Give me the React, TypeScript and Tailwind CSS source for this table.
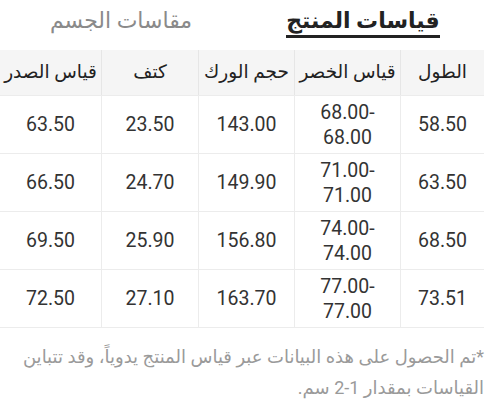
import React from "react";

const rows = [
  ["58.50", ["68.00-", "68.00"], "143.00", "23.50", "63.50"],
  ["63.50", ["71.00-", "71.00"], "149.90", "24.70", "66.50"],
  ["68.50", ["74.00-", "74.00"], "156.80", "25.90", "69.50"],
  ["73.51", ["77.00-", "77.00"], "163.70", "27.10", "72.50"],
];

const headers = ["الطول", "قياس الخصر", "حجم الورك", "كتف", "قياس الصدر"];
const widths = ["w-[84px]", "w-[106px]", "w-[96px]", "w-[97px]", "w-[101px]"];

export default function App() {
  return (
    <div
      className="w-[500px] h-[401px] bg-white overflow-hidden"
      style={{ fontFamily: "Roboto, 'DejaVu Sans', sans-serif" }}
    >
      <div dir="rtl" className="w-[484px]">
        <div className="flex h-[50px] items-start">
          <div className="w-1/2 flex justify-center pt-[7px]">
            <span className="text-[22px] font-bold text-[#222] border-b-[3px] border-[#222] leading-[28px]">
              قياسات المنتج
            </span>
          </div>
          <div className="w-1/2 flex justify-center pt-[7px]">
            <span className="text-[22px] text-[#8a8a8a] leading-[28px]">مقاسات الجسم</span>
          </div>
        </div>
        <div className="flex h-[46px] bg-[#f5f5f5] border-b border-[#ececec]">
          {headers.map((h, i) => (
            <div
              key={i}
              className={`${widths[i]} flex items-center justify-center text-[18.5px] text-[#222] ${i < 4 ? "border-l border-[#e6e6e6]" : ""}`}
            >
              {h}
            </div>
          ))}
        </div>
        {rows.map((r, ri) => (
          <div key={ri} className="flex h-[58px] border-b border-[#ececec]">
            {r.map((c, ci) => (
              <div
                key={ci}
                className={`${widths[ci]} flex flex-col items-center justify-center text-[19.5px] text-[#333] leading-[25px] ${ci < 4 ? "border-l border-[#ececec]" : ""}`}
              >
                {Array.isArray(c) ? (
                  <>
                    <span dir="ltr">{c[0]}</span>
                    <span dir="ltr">{c[1]}</span>
                  </>
                ) : (
                  <span dir="ltr">{c}</span>
                )}
              </div>
            ))}
          </div>
        ))}
        <p className="mt-[13px] text-[18px] leading-[31px] text-[#9a9a9a]">
          *تم الحصول على هذه البيانات عبر قياس المنتج يدوياً، وقد تتباين القياسات بمقدار 1-2 سم.
        </p>
      </div>
    </div>
  );
}
